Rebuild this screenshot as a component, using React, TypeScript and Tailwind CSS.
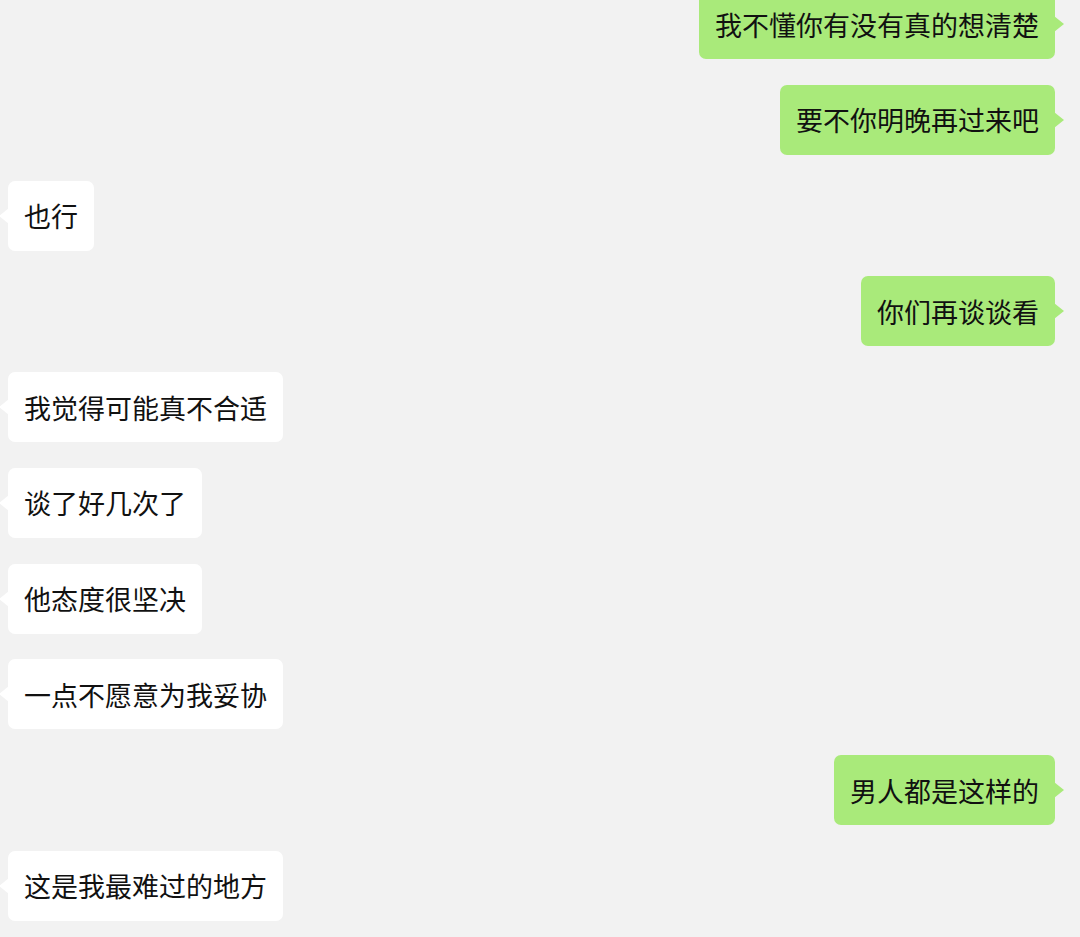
const messages: { text: string; mine: boolean }[] = [
  { text: "我不懂你有没有真的想清楚", mine: true },
  { text: "要不你明晚再过来吧", mine: true },
  { text: "也行", mine: false },
  { text: "你们再谈谈看", mine: true },
  { text: "我觉得可能真不合适", mine: false },
  { text: "谈了好几次了", mine: false },
  { text: "他态度很坚决", mine: false },
  { text: "一点不愿意为我妥协", mine: false },
  { text: "男人都是这样的", mine: true },
  { text: "这是我最难过的地方", mine: false },
]

function Bubble({ text, mine }: { text: string; mine: boolean }) {
  return (
    <div className={mine ? "flex justify-end pr-[25px]" : "flex justify-start pl-[8px]"}>
      <div
        className={
          "relative h-[70px] flex items-center px-[16px] rounded-[7px] text-[27px] leading-none text-[#111111] " +
          (mine ? "bg-[#a9ea7a]" : "bg-white")
        }
      >
        <span>{text}</span>
        {mine ? (
          <span className="absolute right-[-9px] top-[27px] w-0 h-0 border-y-[8px] border-y-transparent border-l-[10px] border-l-[#a9ea7a]" />
        ) : (
          <span className="absolute left-[-9px] top-[27px] w-0 h-0 border-y-[8px] border-y-transparent border-r-[10px] border-r-white" />
        )}
      </div>
    </div>
  )
}

export default function App() {
  return (
    <div
      className="w-[1080px] h-[937px] overflow-hidden bg-[#f2f2f2]"
      style={{ fontFamily: '"Noto Sans CJK SC", "Noto Sans", sans-serif' }}
    >
      <div className="flex flex-col gap-[25.75px] -mt-[11px]">
        {messages.map((m, i) => (
          <Bubble key={i} text={m.text} mine={m.mine} />
        ))}
      </div>
    </div>
  )
}
